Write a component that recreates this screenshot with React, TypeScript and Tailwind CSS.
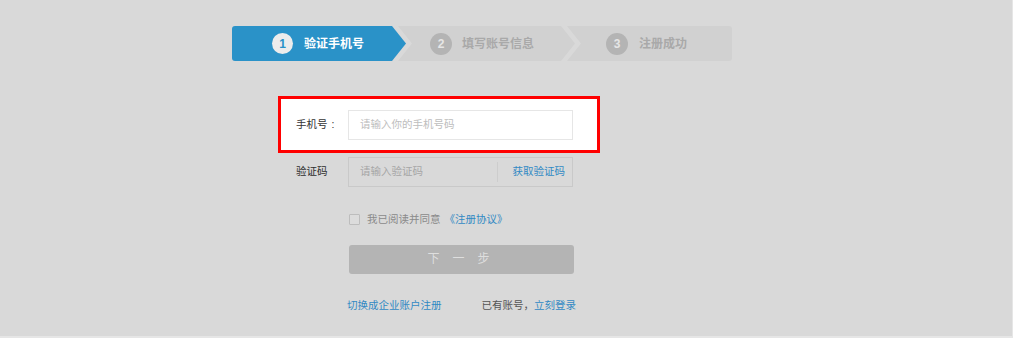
import React from "react";

const font = { fontFamily: '"Liberation Sans", "Noto Sans CJK SC", sans-serif' };

export default function App() {
  return (
    <div
      className="w-[1013px] h-[338px] bg-[#d9d9d9] border-r border-b-2 border-[#e6e6e6] overflow-hidden"
      style={font}
    >
      {/* Steps */}
      <div className="pt-[26px] pl-[232px]">
        <div className="flex h-[35px] w-[500px]">
          <div className="flex items-center w-[174px] pl-[40px] bg-[#2a92c8] rounded-l-[3px] [clip-path:polygon(0_0,calc(100%-14px)_0,100%_50%,calc(100%-14px)_100%,0_100%)]">
            <div className="w-[21px] h-[21px] rounded-full bg-[#ececec] text-[#2a92c8] text-[12px] font-bold flex items-center justify-center">
              1
            </div>
            <span className="ml-[11px] text-white text-[12px] font-bold leading-none">验证手机号</span>
          </div>
          <div className="flex items-center w-[177px] -ml-[8px] pl-[32px] bg-[#d1d1d1] [clip-path:polygon(0_0,calc(100%-14px)_0,100%_50%,calc(100%-14px)_100%,0_100%,14px_50%)]">
            <div className="w-[22px] h-[22px] rounded-full bg-[#b4b4b4] text-[#e6e6e6] text-[12px] font-bold flex items-center justify-center">
              2
            </div>
            <span className="ml-[10px] text-[#a9a9a9] text-[12px] font-bold leading-none">填写账号信息</span>
          </div>
          <div className="flex items-center flex-1 -ml-[8px] pl-[39px] bg-[#d1d1d1] rounded-r-[3px] [clip-path:polygon(0_0,100%_0,100%_100%,0_100%,14px_50%)]">
            <div className="w-[22px] h-[22px] rounded-full bg-[#b4b4b4] text-[#e6e6e6] text-[12px] font-bold flex items-center justify-center">
              3
            </div>
            <span className="ml-[11px] text-[#a9a9a9] text-[12px] font-bold leading-none">注册成功</span>
          </div>
        </div>
      </div>

      {/* Form */}
      <div className="pl-[232px] pt-[35px] text-[10.5px]">
        {/* highlighted row */}
        <div className="ml-[46px] w-[322px] border-[3px] border-[#ff0000] bg-white flex items-center pl-[15px] pt-[11px] pb-[10px]">
          <span className="w-[52px] text-[#333]">
            手机号<span className="ml-[4px]">:</span>
          </span>
          <div className="w-[225px] h-[30px] border border-[#e6e6e6] bg-white flex items-center pl-[11px] text-[#bdbdbd]">
            请输入你的手机号码
          </div>
        </div>

        {/* code row */}
        <div className="ml-[64px] mt-[4px] flex items-center">
          <span className="w-[52px] text-[#2e2e2e]">验证码</span>
          <div className="w-[225px] h-[30px] border border-[#c9c9c9] bg-[#d9d9d9] flex items-center">
            <span className="pl-[11px] flex-1 text-[#a6a6a6]">请输入验证码</span>
            <span className="w-px h-[20px] bg-[#cdcdcd]"></span>
            <span className="pl-[15px] pr-[7px] text-[#3189c4]">获取验证码</span>
          </div>
        </div>

        {/* agreement */}
        <div className="ml-[117px] mt-[25px] flex items-center">
          <span className="w-[11px] h-[11px] border border-[#bdbdbd] bg-[#dcdcdc] rounded-[1px]"></span>
          <span className="ml-[7px] text-[#8a8a8a]">我已阅读并同意</span>
          <span className="ml-[4px] text-[#3189c4]">《注册协议》</span>
        </div>

        {/* button */}
        <div className="ml-[117px] mt-[17px] w-[225px] h-[29px] rounded-[3px] bg-[#b4b4b4] flex items-center justify-center text-[12px] text-[#dedede] gap-[13px] pr-[6px]">
          <span>下</span>
          <span>一</span>
          <span>步</span>
        </div>

        {/* bottom links */}
        <div className="ml-[115px] mt-[24px] flex items-center">
          <span className="text-[#3189c4]">切换成企业账户注册</span>
          <span className="ml-[40px] text-[#555]">已有账号，</span>
          <span className="text-[#3189c4]">立刻登录</span>
        </div>
      </div>
    </div>
  );
}
